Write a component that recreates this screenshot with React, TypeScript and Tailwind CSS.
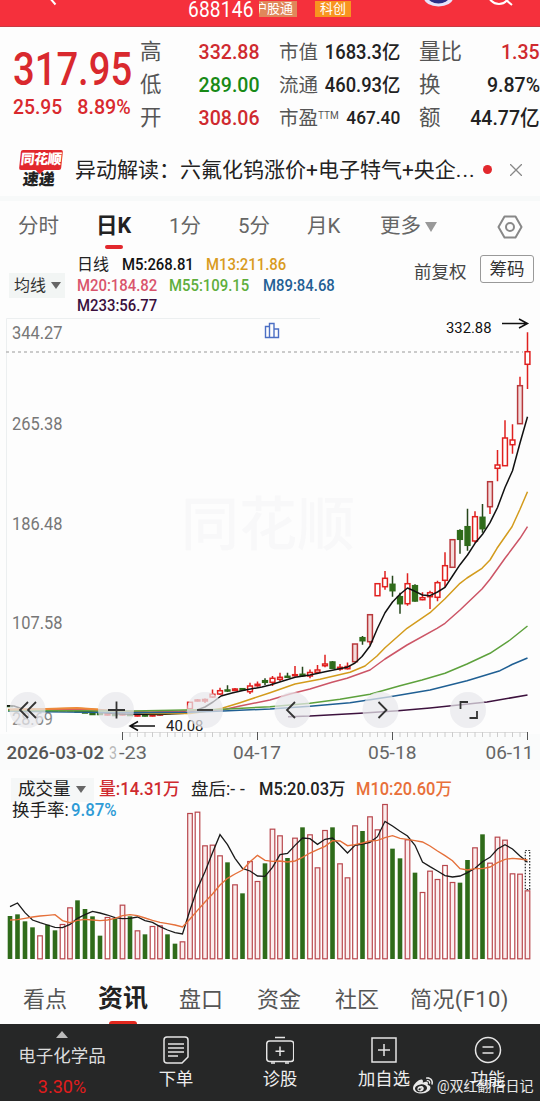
import React from 'react';
import { FaWeibo } from 'react-icons/fa';

// Types
interface Label {
  x: number;
  y: number;
  width: number;
  text: string;
  color: string;
  size?: number;
  weight?: number;
  opacity?: number;
}

// [up, open/close top, open/close bottom, high, low] in chart pixels
type Candle = [number, number, number, number, number];

const STEP = 7.5;
const FIRST_X = 10;
const barX = (i: number) => FIRST_X + i * STEP;

// Daily candles
const candles: Candle[] = [
  [0, 706, 706.5, 706, 707], [0, 709.5, 710, 709.5, 710], [1, 709.5, 710, 709.5, 710.5], [1, 709.5, 711, 709.5, 711],
  [1, 710, 711, 710, 711], [0, 710, 711, 710, 711], [0, 710, 711, 710, 711], [1, 710, 711, 710, 711],
  [1, 710, 711, 710, 711], [0, 711, 712, 711, 712], [0, 712, 713, 712, 713], [0, 713, 714.5, 712.5, 714.5],
  [0, 713.5, 714.5, 713, 715], [1, 714, 715, 713.5, 715.5], [0, 714, 715.5, 713, 716], [1, 714, 715, 713.5, 715.5],
  [0, 714.5, 715.5, 714, 716], [1, 714.5, 716, 714, 716.5], [0, 715, 716, 714, 716.5], [1, 714.5, 716, 714, 716.5],
  [1, 714, 715, 713, 715.5], [0, 713, 713.5, 713, 714], [0, 712.5, 713, 712, 713.5], [1, 711.5, 712.5, 711, 713],
  [1, 702.3, 708.7, 702.3, 708.7], [1, 700, 701, 699, 701.5], [1, 699.5, 701, 698.5, 703], [1, 694.3, 697, 689.5, 698],
  [1, 690.7, 694, 687.7, 695], [0, 690, 691, 685.3, 692], [1, 689, 690.5, 688, 691], [0, 688.7, 690, 688, 690.5],
  [1, 686, 691.7, 682.7, 694], [1, 684.3, 685.7, 681.5, 686.7], [0, 680.7, 682.3, 678.3, 685], [1, 678.3, 682.3, 676, 686],
  [1, 677.3, 679.3, 672.7, 681.3], [0, 676.3, 677.3, 672.7, 678], [1, 674.7, 675.7, 666, 676.5], [0, 674.3, 675.7, 666.7, 677],
  [1, 672.5, 676, 669.5, 678.3], [1, 670, 672.3, 665, 673.3], [1, 664, 665.7, 654.7, 667.3], [0, 662, 668.3, 661, 669],
  [1, 667.3, 669, 664, 670.7], [1, 666.5, 668.7, 662.5, 669.5], [1, 644, 661.7, 644, 661.7], [0, 637.7, 640.7, 636, 644.7],
  [1, 614.7, 641.7, 614.7, 645], [1, 583.7, 595.7, 583.7, 595.7], [1, 578.3, 586.7, 571, 589.7], [0, 584.3, 590.7, 575.7, 596.7],
  [0, 596.7, 603.7, 592.7, 613.7], [1, 583.7, 603.7, 573.3, 605.7], [0, 585.7, 601, 584.3, 601.7], [1, 597.7, 599.7, 592.3, 600.3],
  [1, 592.7, 596.7, 590.7, 609], [1, 582.7, 597.3, 580.7, 601.3], [1, 565.7, 580.3, 552.3, 587.3], [1, 539.7, 567.3, 539.7, 567.3],
  [0, 530.7, 539.3, 529.3, 553.7], [0, 526.7, 545.3, 508.7, 550.7], [1, 516.7, 541, 511.3, 542.7], [0, 517.3, 528.7, 504, 532.7],
  [1, 481.7, 506.7, 481.7, 514], [1, 465, 468.3, 450, 481.3], [1, 438, 465.7, 420.3, 465.7], [1, 440, 444.7, 424.3, 453.7],
  [1, 385.7, 423.7, 376.7, 423.7], [1, 351.7, 364.3, 332.3, 389],
];

// Candles drawn with a tinted body
const tinted = [46, 48, 59, 64, 68];

// Moving averages of the price
const averages = [
  { color: '#111111', points: '7,705.7 14,706 24,709.5 60,710 95,712 120,714 160,714.5 185,713.3 195,710.7 205,707 213,702 221,696 232,693 245,690 262,687 270,685 295,677.3 310,675 325,671.7 347,667.3 355,663 362,656.5 370,646 377.5,628.3 385,612.7 392.5,602 400,594.3 407.5,588 415,591.3 422.5,595 430,595.7 437.5,592 445,587.3 452.5,576 460,564.7 467.5,555 475,543.3 482.5,534.3 490,522.7 497.5,507.5 505,487.5 512.5,470.7 520,443 527.5,416.7' },
  { color: '#3d123e', points: '288,716.7 310,716 360,713.3 398,710.7 430,708 487,702 527.5,695' },
  { color: '#d39b1c', points: '8,709.5 46,709 77,708.3 98,709.5 150,713.5 190,713.5 205,711.5 222,708.3 240,702.7 270,692.7 295,684 320,679.3 350,672.3 365,666 377,656 385,647.7 407,628.3 430,612.7 445,598.7 460,583.3 467,578 482,568.3 490,560 497,548.3 512,526.7 520,509.3 527.5,491.7' },
  { color: '#cc5566', points: '8,710 80,709.5 150,712 222,710 240,706 270,700 290,694 310,689 332,682.3 347,678.3 370,670 385,659 407,645 437,628.3 445,623.3 460,610 482,589 490,579.3 505,558.3 520,538.3 527.5,526.7' },
  { color: '#1f5f93', points: '8,711 46,711.7 133,712.7 190,712.2 223,711 270,709 310,706.3 350,702.7 390,696.7 430,690 467,680.7 500,670.7 512,664.5 527.5,658' },
  { color: '#5da13c', points: '8,710.5 60,710.7 133,711 223,709.3 270,706.7 310,703.3 340,699.3 370,694.3 400,685.7 422,680 445,673.3 467,664 490,653.3 510,640 527.5,626' },
];

const priceLabels: Label[] = [
  { x: 12, y: 338.5, width: 50.5, text: '344.27', color: '#777' },
  { x: 12, y: 430, width: 50.5, text: '265.38', color: '#777' },
  { x: 12, y: 529.5, width: 50.5, text: '186.48', color: '#777' },
  { x: 12, y: 628.5, width: 50.5, text: '107.58', color: '#777' },
  { x: 12, y: 724.5, width: 41, text: '28.69', color: '#8a8a8a' },
  { x: 446, y: 333, width: 45.5, text: '332.88', color: '#111', size: 15.5 },
  { x: 166, y: 731, width: 37.5, text: '40.08', color: '#222', size: 15.5 },
  { x: 6.5, y: 759, width: 97.5, text: '2026-03-02', color: '#555', weight: 500 },
  { x: 109, y: 759, width: 8, text: '3', color: '#555', opacity: 0.4 },
  { x: 119, y: 759, width: 28, text: '-23', color: '#666' },
  { x: 233, y: 759, width: 48, text: '04-17', color: '#666' },
  { x: 368, y: 759, width: 48.5, text: '05-18', color: '#666' },
  { x: 485.5, y: 759, width: 48, text: '06-11', color: '#666' },
];

// Volume bars: g = down day, r = up day, number = distance of the top from the panel top (x3)
const volumes = (
  'g438 g433 g454 g472 r496 g464 g481 r462 r412 g391 g417 g439 g497 r441 g446 r404 g439 r481 g493 r468 ' +
  'r466 g493 g521 r514 r129 r125 r226 r224 r256 g277 r343 g370 r273 r333 g280 r176 r196 g264 r203 g172 ' +
  'r193 r292 r180 g172 r280 r322 r166 g183 r139 r178 r102 g236 g265 r208 g308 r366 r302 r327 r285 r336 ' +
  'g338 g270 r232 g193 r278 r200 r209 r310 r311 r361'
).split(' ');

const volumeM5 = [
  410, 399, 428, 450, 458, 465, 472, 473, 463, 445, 434, 424, 429, 435, 443, 446, 445, 441, 452, 457, 470, 480, 488, 492,
  420, 355, 305, 248, 194, 224, 265, 295, 303, 318, 319, 292, 254, 250, 226, 204, 206, 223, 208, 204, 226, 249, 226, 222,
  217, 200, 154, 168, 184, 198, 226, 276, 290, 303, 317, 321, 318, 308, 295, 275, 262, 237, 224, 237, 258, 277,
];
const volumeM10 = [
  450, 449, 445, 441, 438, 436, 434, 452, 458, 451, 448, 450, 452, 450, 445, 437, 434, 437, 444, 451, 457, 461, 465, 471,
  447, 421, 396, 372, 345, 325, 312, 300, 275, 256, 271, 274, 273, 276, 273, 262, 249, 239, 229, 212, 213, 227, 224, 219,
  213, 211, 203, 197, 205, 208, 212, 216, 228, 243, 257, 272, 296, 300, 296, 296, 291, 278, 268, 265, 267, 270,
];

const volY = (v: number) => 770 + v / 3;
const toPoints = (values: number[]) => values.map((v, i) => `${barX(i)},${volY(v)}`).join(' ');

const Header = () => (
  <header className="relative flex h-[27px] items-start overflow-hidden border-b border-[#c93a42] bg-[#f5303c] pl-[188px] text-white">
    <svg className="absolute inset-0" width="540" height="27" fill="none">
      <path d="M49 -3L55.5 4.500" stroke="#fff" strokeWidth="2" />
      <ellipse cx="438.500" cy="-2" rx="14.500" ry="8.500" fill="#e6e3fb" />
      <ellipse cx="438.500" cy="-3" rx="10.500" ry="6.500" fill="#2b2f86" />
      <circle cx="499" cy="-7" r="11" stroke="#fff" strokeWidth="2" />
      <path d="M506 0L512 5" stroke="#fff" strokeWidth="2" />
    </svg>
    <div className="w-[71px] shrink-0">
      <span className="inline-block origin-left scale-x-[0.89] text-[21.500px] leading-[19px] tracking-[0.2px]">688146</span>
    </div>
    <div className="mt-px flex h-4 w-[38px] shrink-0 justify-end overflow-hidden bg-[#e0875a] pr-1 text-[13px] leading-4 whitespace-nowrap">沪股通</div>
    <div className="mt-px ml-[18px] h-4 w-9 shrink-0 bg-[#f8941f] text-center text-[13px] leading-4">科创</div>
  </header>
);

interface StatProps {
  label: React.ReactNode;
  value: string;
  labelClass?: string;
  valueClass: string;
}

const Stat = ({ label, value, labelClass = 'text-[21.500px]', valueClass }: StatProps) => (
  <div className="flex h-[33px] items-center justify-between whitespace-nowrap">
    <span className={`text-[#555] ${labelClass}`}>{label}</span>
    <span className={`origin-right font-medium ${valueClass}`}>{value}</span>
  </div>
);

const Quote = () => (
  <section className="grid h-[116px] grid-cols-[127px_120px_121px_121px] pt-[9px] pl-[13px]">
    <div className="pt-[8px] text-[#d9292e]">
      <div className="w-[140px] origin-left scale-x-[0.83] text-[46px] leading-[50px] font-medium">317.95</div>
      <div className="-mt-px flex justify-between pr-[9px] text-[20.500px] leading-[28px] font-medium">
        <span className="w-[50px] origin-left scale-x-[0.94]">25.95</span>
        <span className="origin-right scale-x-[0.96]">8.89%</span>
      </div>
    </div>
    <div>
      <Stat label="高" value="332.88" valueClass="scale-x-[0.93] text-[21px] text-[#cf2a2f]" />
      <Stat label="低" value="289.00" valueClass="scale-x-[0.93] text-[21px] text-[#188a16]" />
      <Stat label="开" value="308.06" valueClass="scale-x-[0.93] text-[21px] text-[#cf2a2f]" />
    </div>
    <div className="ml-[19px]">
      <div className="w-[121px]">
        <Stat label="市值" value="1683.3亿" labelClass="text-[19.500px]" valueClass="scale-x-[0.94] text-[19.500px] -ml-4 text-[#222]" />
        <Stat label="流通" value="460.93亿" labelClass="text-[19.500px]" valueClass="scale-x-[0.94] text-[19.500px] -ml-4 text-[#222]" />
        <Stat
          label={<>市盈<sup className="top-[-6px] text-[10px]">TTM</sup></>}
          value="467.40"
          labelClass="text-[19.500px]"
          valueClass="scale-x-[0.91] text-[19px] -ml-4 text-[#222]"
        />
      </div>
    </div>
    <div className="ml-[38px] w-[121px]">
      <Stat label="量比" value="1.35" valueClass="scale-x-[0.93] text-[21px] text-[#cf2a2f]" />
      <Stat label="换" value="9.87%" valueClass="scale-x-[0.93] text-[21px] text-[#222]" />
      <Stat label="额" value="44.77亿" valueClass="scale-x-[0.93] text-[21px] text-[#222]" />
    </div>
  </section>
);

const News = () => (
  <section className="flex h-[58px] items-center border-b-[5px] border-[#f7f9f9] pl-[18px] text-[#222]">
    <div className="flex w-11 -skew-x-6 flex-col items-center">
      <div className="relative h-[20px] w-[42px] rounded-[2px] bg-[#e2282d] text-center text-[14px] leading-[19px] font-black tracking-[-0.5px] text-white">
        同花顺
        <span className="absolute top-[17px] left-[18px] size-[6px] rotate-45 bg-[#e2282d]" />
      </div>
      <div className="text-[16px] leading-[19px] font-black">速递</div>
    </div>
    <div className="ml-[13px] w-[406px] pt-[2px] text-[21px] whitespace-nowrap">异动解读：六氟化钨涨价+电子特气+央企<span className="tracking-[1px]">...</span></div>
    <span className="ml-[2px] size-[9px] shrink-0 rounded-full bg-[#e2282d]" />
    <svg className="ml-[18px] shrink-0" width="12" height="12" stroke="#888" strokeWidth="1.300">
      <path d="M0 0L12 12M12 0L0 12" />
    </svg>
  </section>
);

const PeriodTabs = () => (
  <nav className="flex h-[51px] items-center pl-[18px] text-[20.500px] whitespace-nowrap text-[#666]">
    <span className="w-[78px]">分时</span>
    <span className="relative w-[73px] text-[21.500px] font-bold text-[#222]">
      日K
      <i className="absolute top-[35px] left-[9px] h-[4px] w-[18px] rounded-full bg-[#e2282d]" />
    </span>
    <span className="w-[69px]">1分</span>
    <span className="w-[69px]">5分</span>
    <span className="w-[73px]">月K</span>
    <span>更多</span>
    <svg className="ml-[4px]" width="12" height="10" fill="#999"><path d="M0 0H12L6 10Z" /></svg>
    <svg className="ml-[60px]" width="26" height="24" fill="none" stroke="#888" strokeWidth="2">
      <path d="M7.500 1.500H18.500L24.500 12L18.500 22.500H7.500L1.500 12Z" strokeLinejoin="round" />
      <circle cx="13" cy="12" r="4" />
    </svg>
  </nav>
);

const AverageLegend = () => (
  <section className="flex h-[66px] pl-[9px] text-[16px] whitespace-nowrap">
    <div className="mt-[21px] flex h-[25px] w-14 items-center bg-[#f2f5f4] pl-[5px] text-[#333]">
      均线
      <svg className="ml-[5px]" width="10" height="7" fill="#666"><path d="M0 0H10L5 7Z" /></svg>
    </div>
    <div className="ml-[12px] w-[337px] pt-[3px] leading-[20.500px] font-medium">
      <div className="flex">
        <span className="w-[45px] font-normal text-[#222]">日线</span>
        <span className="w-[84px] origin-left scale-x-[0.93] text-[#111]">M5:268.81</span>
        <span className="origin-left scale-x-[0.93] text-[#d99b1e]">M13:211.86</span>
      </div>
      <div className="flex">
        <span className="w-[92px] origin-left scale-x-[0.93] text-[#d9546c]">M20:184.82</span>
        <span className="w-[94px] origin-left scale-x-[0.93] text-[#5fae3c]">M55:109.15</span>
        <span className="origin-left scale-x-[0.93] text-[#235f94]">M89:84.68</span>
      </div>
      <div className="origin-left scale-x-[0.93] text-[#3a0f3d]">M233:56.77</div>
    </div>
    <div className="flex h-[32px] items-center pt-[7px] text-[#444]">
      <span className="w-[66px] pt-[2px] text-[17.500px]">前复权</span>
      <span className="-mt-[6px] h-[28px] w-[54px] rounded-[3px] border border-[#999] text-center text-[17.500px] leading-[26px] text-[#333]">筹码</span>
    </div>
  </section>
);

const ChartText = ({ x, y, width, text, color, size = 18, weight = 400, opacity = 1 }: Label) => (
  <text x={x} y={y} textLength={width} lengthAdjust="spacingAndGlyphs" fontSize={size} fontWeight={weight} fill={color} opacity={opacity}>
    {text}
  </text>
);

const PriceChart = () => (
  <svg className="block" width="540" height="452" viewBox="0 318 540 452" fill="none">
    <rect x="0" y="734" width="540" height="36" fill="#fafbfb" />
    <path d="M6.500 732V318.500H320" stroke="#eceff0" />
    <text x="268" y="545" textAnchor="middle" fontSize="58" fontWeight="500" fill="#f8f8f9">同花顺</text>
    <path d="M6 352H523" stroke="#bbb" strokeWidth="1.400" strokeDasharray="3 3" />
    <path d="M265.500 326.500H269.500V337.500H265.500ZM269.500 323.500H274V337.500H269.500ZM274 329H278.500V337.500H274Z" stroke="#4c6fc4" strokeWidth="1.400" />

    {priceLabels.slice(0, 5).map((label) => <ChartText key={label.text} {...label} />)}

    {/* Candles */}
    {candles.map(([up, top, bottom, high, low], i) => {
      const x = barX(i);
      const color = up ? '#e0201f' : '#2f6b1a';
      return (
        <g key={i} stroke={color} strokeWidth="1.500">
          <path d={`M${x} ${high}V${top}M${x} ${bottom}V${low}`} stroke={up ? color : '#26451b'} />
          <rect x={x - 2.400} y={top} width="4.800" height={bottom - top} stroke={tinted.includes(i) ? '#b8383b' : color} fill={up ? (tinted.includes(i) ? '#f3dcdc' : '#fff') : color} />
        </g>
      );
    })}

    {averages.map((line) => (
      <polyline key={line.color} points={line.points} stroke={line.color} strokeWidth="1.500" strokeLinejoin="round" />
    ))}
    <path d="M10 709.500L46 709L77 708L98 709.500" stroke="#ee8a3a" strokeWidth="2" />

    {/* High and low markers */}
    <path d="M502 323.500H527M519 319L527.500 323.500L519 328M155 726H130M138 721.500L130 726L138 730.500" stroke="#111" strokeWidth="1.500" />

    {/* Time axis */}
    <path d="M122 732.500H528" stroke="#ddd" />
    {Array.from({ length: 55 }, (_, i) => {
      const x = 122.500 + i * STEP;
      const major = i % 18 === 0;
      return <path key={i} d={`M${x} 732V${major ? 740 : 737}`} stroke={major ? '#555' : '#ccc'} strokeWidth="1" />;
    })}
    {priceLabels.slice(5).map((label) => <ChartText key={label.text} {...label} />)}

    {/* Zoom and pan buttons */}
    {[27.5, 116, 205, 292.5, 380.5, 468].map((x) => (
      <circle key={x} cx={x} cy="710" r="18" fill="#e8e8ec" opacity="0.720" />
    ))}
    <g stroke="#333" strokeWidth="1.800">
      <path d="M28 702L20 710L28 718M36 702L28 710L36 718" />
      <path d="M108 710H125M116.500 701.500V718.500" />
      <path d="M197 710H213" />
      <path d="M295 702L287 710L295 718" />
      <path d="M378.500 702L386.500 710L378.500 718" />
      <path d="M460.500 709V702H468M469.500 718H477V711" />
    </g>
  </svg>
);

const VolumeChart = () => (
  <section className="h-[200px] pt-[9px] text-[17.500px] whitespace-nowrap text-[#222]">
    <div className="flex h-[21px] items-center pl-[11px] font-medium">
      <div className="flex h-6 w-[83px] items-center bg-[#f5f7f7] pl-[7px] font-normal">
        成交量
        <svg className="ml-[5px]" width="10" height="7" fill="#666"><path d="M0 0H10L5 7Z" /></svg>
      </div>
      <span className="ml-[5px] w-[92px] origin-left scale-x-[0.96] text-[#cf2a2f]">量:14.31万</span>
      <span className="w-[68px] font-normal">盘后:<span className="tracking-[5px]">--</span></span>
      <span className="w-[97px] origin-left scale-x-[0.94]">M5:20.03万</span>
      <span className="origin-left scale-x-[0.94] text-[#e8703a]">M10:20.60万</span>
    </div>
    <div className="flex h-[21px] items-center pl-3">
      <span className="w-[59px]">换手率:</span>
      <span className="origin-left scale-x-[0.96] font-medium text-[#2f9bd6]">9.87%</span>
    </div>
    <svg className="-mt-[21px] block" width="540" height="170" viewBox="0 800 540 170" fill="none">
      {volumes.map((bar, i) => {
        const up = bar[0] === 'r';
        const y = volY(Number(bar.slice(1)));
        return up ? (
          <rect key={i} x={barX(i) - 2.300} y={y + 0.500} width="4.600" height={958.300 - y} stroke="#b8474d" strokeWidth="1.200" fill={i % 3 === 1 ? '#fff' : '#fbeeee'} />
        ) : (
          <rect key={i} x={barX(i) - 2.300} y={y} width="4.600" height={959 - y} fill="#2f6b1a" />
        );
      })}
      <rect x={barX(69) - 2.200} y="850.500" width="4.400" height="39" stroke="#222" strokeWidth="1.200" strokeDasharray="1.500 1.500" />
      <polyline points={toPoints(volumeM5)} stroke="#1a1a1a" strokeWidth="1.300" />
      <polyline points={toPoints(volumeM10)} stroke="#e5703a" strokeWidth="1.400" />
    </svg>
  </section>
);

const InfoTabs = () => (
  <nav className="flex h-[54px] items-center pt-1 pl-[23px] text-[22px] whitespace-nowrap text-[#555]">
    <span className="w-[75px]">看点</span>
    <span className="relative w-[81px] text-[25px] font-bold text-[#222]">
      资讯
      <i className="absolute top-[41px] left-[11px] h-[3px] w-[28px] rounded-t bg-[#e2281e]" />
    </span>
    <span className="w-[78px]">盘口</span>
    <span className="w-[78px]">资金</span>
    <span className="w-[75px]">社区</span>
    <span className="tracking-[0.4px]">简况(F10)</span>
  </nav>
);

const actions = [
  {
    name: '下单',
    icon: (
      <>
        <path d="M5 1H23Q26 1 26 4V21L20 27H5Q2 27 2 24V4Q2 1 5 1Z" />
        <path d="M6 8H22M6 12H22M6 16H22M6 20H16" />
      </>
    ),
  },
  {
    name: '诊股',
    icon: (
      <>
        <rect x="0.700" y="5" width="27" height="20.500" rx="3" />
        <path d="M9 1.500H19M14 10.500V20M9.500 15.300H18.500M5 27H9M19 27H23" />
      </>
    ),
  },
  {
    name: '加自选',
    icon: (
      <>
        <rect x="2" y="2" width="24" height="24" />
        <path d="M14 8V20M8 14H20" />
      </>
    ),
  },
  {
    name: '功能',
    icon: (
      <>
        <circle cx="14" cy="14" r="12.500" />
        <path d="M8.500 11H19.500M8.500 17H19.500" />
      </>
    ),
  },
];

const BottomBar = () => (
  <footer className="relative flex h-[77px] bg-[#262727] text-[#eee]">
    <div className="flex w-[124px] flex-col items-center pt-[7px]">
      <svg width="12" height="7" fill="#bbb"><path d="M0 7L6 0L12 7Z" /></svg>
      <span className="mt-[5px] text-[17.500px] leading-[26px] text-[#ddd]">电子化学品</span>
      <span className="mt-[5px] text-[18px] leading-[26px] text-[#e01c1c]">3.30%</span>
    </div>
    {actions.map(({ name, icon }) => (
      <div key={name} className="flex w-[104px] flex-col items-center pt-[12px]">
        <svg width="28" height="28" fill="none" stroke="#e5e5e5" strokeWidth="1.500">{icon}</svg>
        <span className="mt-[2px] text-[17.300px] leading-[26px] whitespace-nowrap">{name}</span>
      </div>
    ))}
    <div className="absolute top-[51px] left-[413px] flex items-center gap-[4px] text-[14px] leading-[22px] whitespace-nowrap text-white/90">
      <FaWeibo className="size-[20px]" />
      @双红翻倍日记
    </div>
  </footer>
);

const App = () => {
  return (
    <div className="h-[1101px] w-[540px] overflow-hidden bg-[#fdfdfd] font-[Roboto,'Noto_Sans_CJK_SC',sans-serif]">
      <Header />
      <Quote />
      <News />
      <PeriodTabs />
      <AverageLegend />
      <PriceChart />
      <VolumeChart />
      <InfoTabs />
      <BottomBar />
    </div>
  );
};

export default App;
